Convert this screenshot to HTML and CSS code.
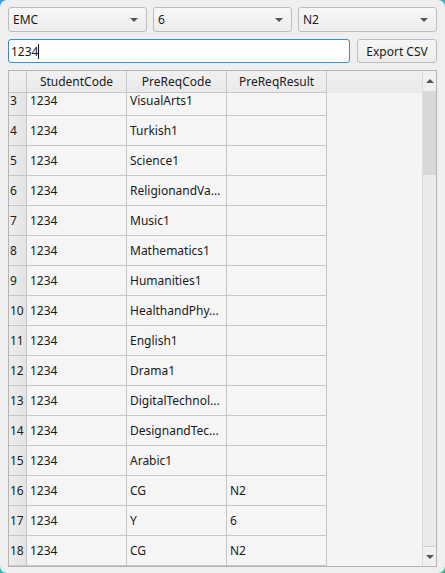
FILE: index.html
```html
<!DOCTYPE html>
<html>
<head>
<meta charset="utf-8">
<link rel="stylesheet" href="styles.css">
</head>
<body>
<div class="window">
  <div class="combos">
    <div class="combo"><span>EMC</span><span class="arrow"></span></div>
    <div class="combo"><span>6</span><span class="arrow"></span></div>
    <div class="combo"><span>N2</span><span class="arrow"></span></div>
  </div>
  <div class="searchrow">
    <div class="input"><span>1234</span><span class="caret"></span></div>
    <div class="button">Export CSV</div>
  </div>
  <div class="table">
    <div class="view">
      <div class="hheader">
        <div class="corner"></div>
        <div class="hcell">StudentCode</div>
        <div class="hcell">PreReqCode</div>
        <div class="hcell">PreReqResult</div>
      </div>
      <div class="body">
        <div class="rows">
          <div class="row"><div class="vh">3</div><div class="cell">1234</div><div class="cell">VisualArts1</div><div class="cell"></div></div>
          <div class="row"><div class="vh">4</div><div class="cell">1234</div><div class="cell">Turkish1</div><div class="cell"></div></div>
          <div class="row"><div class="vh">5</div><div class="cell">1234</div><div class="cell">Science1</div><div class="cell"></div></div>
          <div class="row"><div class="vh">6</div><div class="cell">1234</div><div class="cell">ReligionandVa...</div><div class="cell"></div></div>
          <div class="row"><div class="vh">7</div><div class="cell">1234</div><div class="cell">Music1</div><div class="cell"></div></div>
          <div class="row"><div class="vh">8</div><div class="cell">1234</div><div class="cell">Mathematics1</div><div class="cell"></div></div>
          <div class="row"><div class="vh">9</div><div class="cell">1234</div><div class="cell">Humanities1</div><div class="cell"></div></div>
          <div class="row"><div class="vh">10</div><div class="cell">1234</div><div class="cell">HealthandPhy...</div><div class="cell"></div></div>
          <div class="row"><div class="vh">11</div><div class="cell">1234</div><div class="cell">English1</div><div class="cell"></div></div>
          <div class="row"><div class="vh">12</div><div class="cell">1234</div><div class="cell">Drama1</div><div class="cell"></div></div>
          <div class="row"><div class="vh">13</div><div class="cell">1234</div><div class="cell">DigitalTechnol...</div><div class="cell"></div></div>
          <div class="row"><div class="vh">14</div><div class="cell">1234</div><div class="cell">DesignandTec...</div><div class="cell"></div></div>
          <div class="row"><div class="vh">15</div><div class="cell">1234</div><div class="cell">Arabic1</div><div class="cell"></div></div>
          <div class="row"><div class="vh">16</div><div class="cell">1234</div><div class="cell">CG</div><div class="cell">N2</div></div>
          <div class="row"><div class="vh">17</div><div class="cell">1234</div><div class="cell">Y</div><div class="cell">6</div></div>
          <div class="row"><div class="vh">18</div><div class="cell">1234</div><div class="cell">CG</div><div class="cell">N2</div></div>
        </div>
      </div>
    </div>
    <div class="scrollbar">
      <div class="sbtn up"><span class="tri-up"></span></div>
      <div class="track"><div class="handle"></div></div>
      <div class="sbtn down"><span class="tri-down"></span></div>
    </div>
  </div>
</div>
</body>
</html>
```

FILE: styles.css
```css
* { box-sizing: border-box; }
html, body { margin: 0; padding: 0; }
body {
  width: 445px;
  height: 573px;
  overflow: hidden;
  background: linear-gradient(135deg, #3a9ee2 0%, #2fb8c8 50%, #1fc489 100%);
  font-family: "Noto Sans", "Open Sans", sans-serif;
  font-size: 12px;
  color: #1a1a1a;
}
.window {
  width: 445px;
  height: 573px;
  background: #efefef;
  border-radius: 7px;
  padding: 7px 8px 6px 8px;
  display: flex;
  flex-direction: column;
}
.combos {
  display: grid;
  grid-template-columns: 139px 139px 139px;
  gap: 6px;
  height: 25px;
}
.combo {
  border: 1px solid #bdbdbd;
  border-radius: 3px;
  background: linear-gradient(#f7f7f7, #ededed);
  display: flex;
  align-items: center;
  justify-content: space-between;
  padding: 0 8px 0 4px;
}
.arrow {
  width: 0;
  height: 0;
  border-left: 4px solid transparent;
  border-right: 4px solid transparent;
  border-top: 4px solid #555;
}
.searchrow {
  margin-top: 7px;
  display: flex;
  gap: 7px;
  height: 24px;
}
.input {
  flex: 1;
  border: 1px solid #3a8dc8;
  border-radius: 3px;
  background: #fdfdfd;
  display: flex;
  align-items: center;
  padding-left: 2px;
}
.caret {
  width: 1px;
  height: 15px;
  background: #111;
}
.button {
  width: 80px;
  border: 1px solid #bdbdbd;
  border-radius: 3px;
  background: linear-gradient(#f6f6f6, #ececec);
  display: flex;
  align-items: center;
  justify-content: center;
}
.table {
  margin-top: 7px;
  flex: 1;
  border: 1px solid #b4b4b4;
  background: #f4f4f4;
  display: flex;
  overflow: hidden;
}
.view {
  flex: 1;
  display: flex;
  flex-direction: column;
  min-width: 0;
}
.hheader {
  height: 22px;
  display: grid;
  grid-template-columns: 18px 100px 100px 100px 1fr;
  background: linear-gradient(#f1f1f1, #e9e9e9);
  flex: none;
}
.corner, .hcell {
  border-right: 1px solid #c6c6c6;
  border-bottom: 1px solid #c6c6c6;
}
.hcell {
  display: flex;
  align-items: center;
  justify-content: center;
}
.body {
  flex: 1;
  overflow: hidden;
}
.rows {
  margin-top: -7px;
}
.row {
  display: grid;
  grid-template-columns: 18px 100px 100px 100px;
  height: 30px;
}
.row > div {
  border-right: 1px solid #c6c6c6;
  border-bottom: 1px solid #c6c6c6;
  display: flex;
  align-items: center;
  white-space: nowrap;
  overflow: hidden;
}
.vh {
  background: linear-gradient(90deg, #ececec, #e4e4e4);
  padding-left: 1px;
}
.cell {
  background: #f5f5f5;
  padding-left: 3px;
}
.scrollbar {
  width: 14px;
  display: flex;
  flex-direction: column;
  background: #e9e9e9;
  border-left: 1px solid #dcdcdc;
}
.sbtn {
  height: 20px;
  display: flex;
  align-items: center;
  justify-content: center;
  background: #f0f0f0;
}
.sbtn.down { border-top: 1px solid #cfcfcf; }
.tri-up {
  width: 0; height: 0;
  border-left: 4px solid transparent;
  border-right: 4px solid transparent;
  border-bottom: 4px solid #555;
}
.tri-down {
  width: 0; height: 0;
  border-left: 4px solid transparent;
  border-right: 4px solid transparent;
  border-top: 4px solid #555;
}
.track {
  flex: 1;
  background: #eaeaea;
}
.handle {
  height: 84px;
  background: #d8d8d8;
}
```
